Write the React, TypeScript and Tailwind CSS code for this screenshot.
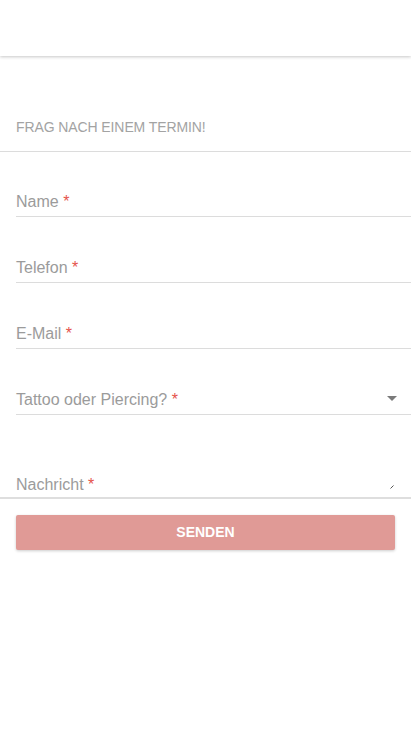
import React from "react";

const Req = () => <span className="text-[#e5534b]"> *</span>;

function Field({ label, first, select }: { label: string; first?: boolean; select?: boolean }) {
  return (
    <div
      className={`${first ? "mt-[35px]" : "mt-[36px]"} h-[30px] border-b border-[#dcdcdc] flex items-center justify-between pr-[14px]`}
    >
      <span className="text-[16px] text-[#9b9b9b]">
        {label}
        <Req />
      </span>
      {select && (
        <svg width="10" height="5" viewBox="0 0 10 5" className="mt-[-2px]">
          <path d="M0 0 L10 0 L5 5 Z" fill="#7a7a7a" />
        </svg>
      )}
    </div>
  );
}

export default function App() {
  return (
    <div
      className="w-[411px] h-[731px] bg-white overflow-hidden"
      style={{ fontFamily: '"Liberation Sans", Arial, sans-serif' }}
    >
      <header className="h-[56px] bg-white shadow-[0_1px_3px_rgba(0,0,0,0.22)] relative z-10" />
      <div className="pt-[63px] pb-[16px] px-4 border-b border-[#dcdcdc]">
        <h2 className="text-[14px] leading-[16px] text-[#a3a3a3] tracking-[-0.1px]">FRAG NACH EINEM TERMIN!</h2>
      </div>
      <div className="pl-4">
        <Field label="Name" first />
        <Field label="Telefon" />
        <Field label="E-Mail" />
        <Field label="Tattoo oder Piercing?" select />
      </div>
      <div className="mt-[55px] h-[29px] border-b-2 border-[#dedede] flex items-start justify-between pl-4 pr-[17px]">
        <span className="text-[16px] leading-[20px] text-[#9b9b9b] mt-[5px]">
          Nachricht
          <Req />
        </span>
        <svg width="4" height="4" viewBox="0 0 4 4" className="mt-[15px]">
          <path d="M3.5 0.5 L0.5 3.5" stroke="#555" strokeWidth="1" />
        </svg>
      </div>
      <div className="px-4 mt-[16px]">
        <button className="w-[379px] h-[35px] rounded-[2px] bg-[#e09a96] text-white text-[14px] font-semibold shadow-[0_1px_3px_rgba(0,0,0,0.2)] flex items-center justify-center">
          SENDEN
        </button>
      </div>
    </div>
  );
}
